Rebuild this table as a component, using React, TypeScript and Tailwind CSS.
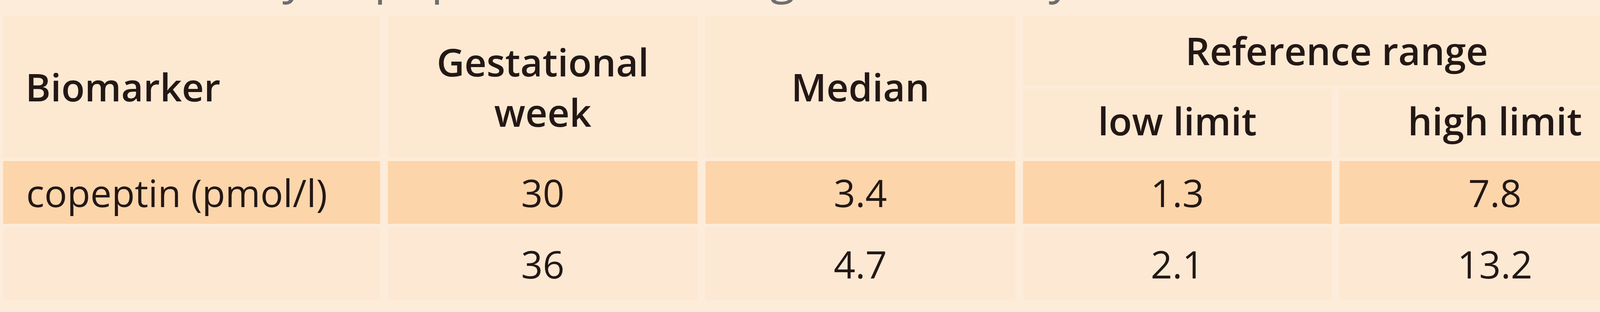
import React from "react";

interface Row {
  biomarker: string;
  week: string;
  median: string;
  low: string;
  high: string;
  shaded: boolean;
}

const rows: Row[] = [
  { biomarker: "copeptin (pmol/l)", week: "30", median: "3.4", low: "1.3", high: "7.8", shaded: true },
  { biomarker: "", week: "36", median: "4.7", low: "2.1", high: "13.2", shaded: false },
];

const cols = "grid grid-cols-[965px_793px_793px_790px_1fr] gap-x-[20px] pl-[8px]";

const App: React.FC = () => {
  return (
    <div
      className="w-[4225px] h-[800px] overflow-hidden bg-[#fdecd9] text-[#231815]"
      style={{ fontFamily: '"Open Sans", "Noto Sans", sans-serif' }}
    >
      {/* cut-off caption, only the descenders show */}
      <div className="h-[32px] overflow-hidden">
        <div className="mt-[-123px] pl-[67px] text-[120px] leading-[120px] text-[#6d6e71] whitespace-nowrap">
          Tab. 1. Study of population in late gestation – by week
        </div>
      </div>

      {/* header */}
      <div className={`${cols} mt-[8px] grid-rows-[179px_178px] gap-y-[8px] font-semibold text-[98px] leading-[129px]`}>
        <div className="row-span-2 bg-[#fde9d2] flex items-center pl-[57px]">Biomarker</div>
        <div className="row-span-2 bg-[#fde9d2] flex items-center justify-center text-center">
          Gestational
          <br />
          week
        </div>
        <div className="row-span-2 bg-[#fde9d2] flex items-center justify-center">Median</div>
        <div className="col-span-2 bg-[#fde9d2] flex justify-center pt-[25px]">Reference range</div>
        <div className="bg-[#fde9d2] flex justify-center pt-[18px]">low limit</div>
        <div className="bg-[#fde9d2] flex justify-center pt-[18px]">high limit</div>
      </div>

      {/* body */}
      <div className={`${cols} mt-[8px] grid-rows-[161px_188px] gap-y-[8px] text-[97px] leading-[129px]`}>
        {rows.map((r, i) => {
          const bg = r.shaded ? "bg-[#fdd5ab]" : "bg-[#fde9d3]";
          return (
            <React.Fragment key={i}>
              <div className={`${bg} flex items-center pl-[59px] whitespace-nowrap`}>{r.biomarker}</div>
              <div className={`${bg} flex items-center justify-center`}>{r.week}</div>
              <div className={`${bg} flex items-center justify-center`}>{r.median}</div>
              <div className={`${bg} flex items-center justify-center`}>{r.low}</div>
              <div className={`${bg} flex items-center justify-center`}>{r.high}</div>
            </React.Fragment>
          );
        })}
      </div>
    </div>
  );
};

export default App;
